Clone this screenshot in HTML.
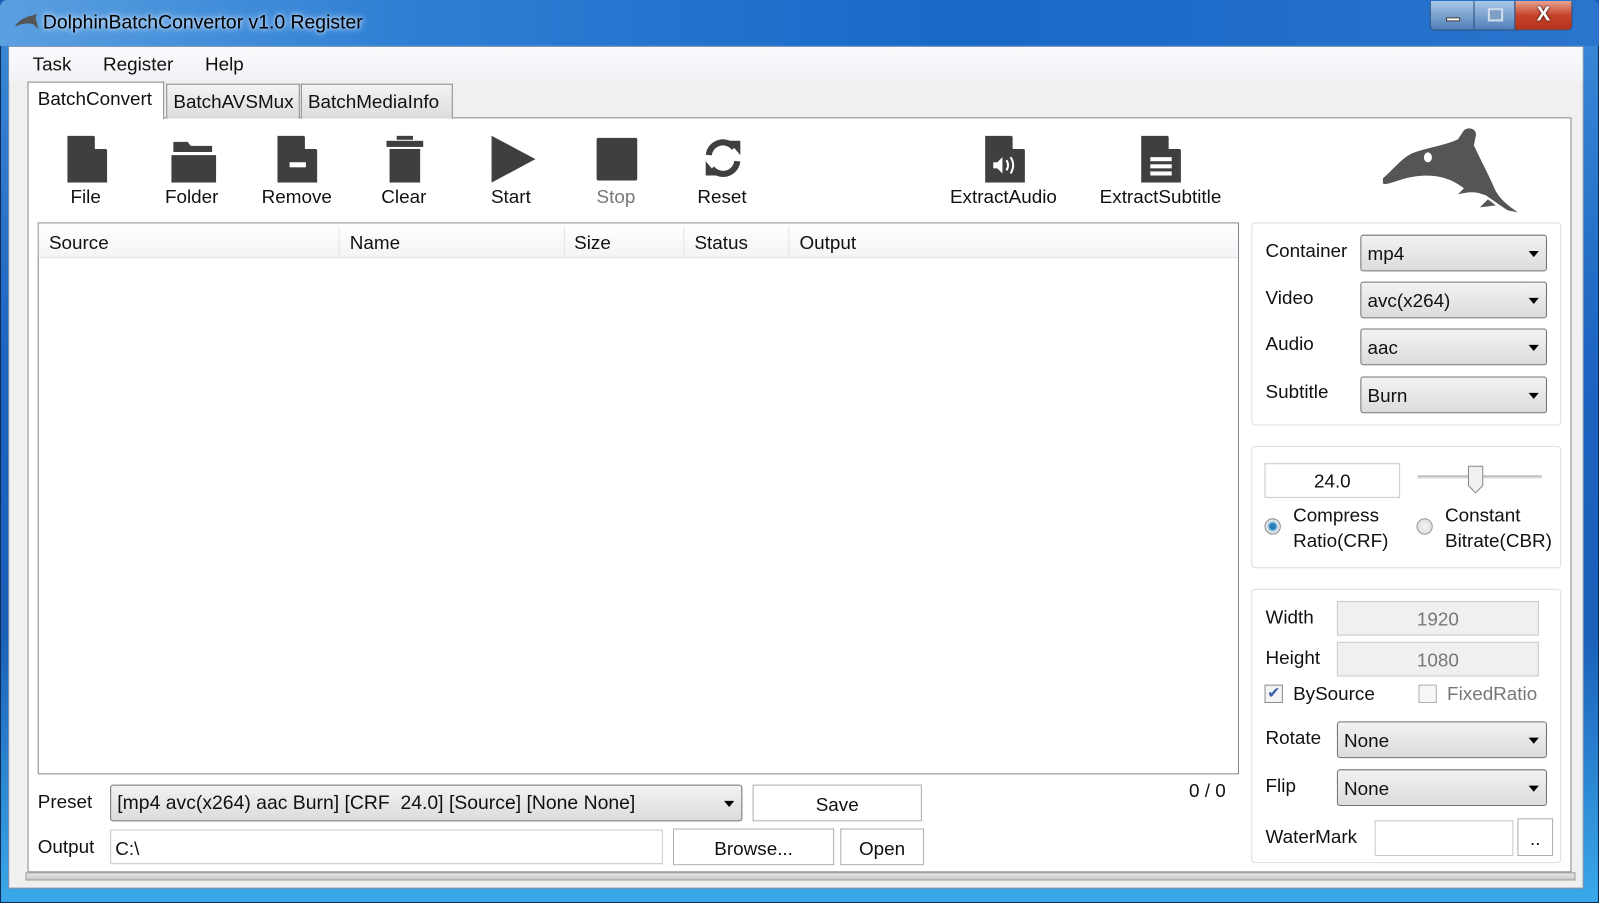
<!DOCTYPE html>
<html><head><meta charset="utf-8"><style>
*{box-sizing:border-box;margin:0;padding:0}
html,body{width:1599px;height:903px;overflow:hidden;background:#1a5fb8}
#w{position:absolute;left:0;top:0;width:1568px;height:885px;transform-origin:0 0;transform:scale(1.01977,1.0203);font-family:"Liberation Sans",sans-serif;font-size:18.5px;color:#111}
.a{position:absolute}
.frame{left:0;top:0;width:1568px;height:885px;background:linear-gradient(180deg,#3c8ad8 0%,#1d64c0 40%,#1a5fb8 70%,#3aa8e8 100%);border:1px solid #0c2e5a;border-radius:7px 7px 0 0}
.title{left:0;top:0;width:1568px;height:45px;background:linear-gradient(90deg,#5a9fe0 0%,#2f7fd4 25%,#1868c8 60%,#2a74cc 100%);border-radius:7px 7px 0 0}
.client{left:8px;top:45px;width:1545px;height:826px;background:#f0f0f0;border:1px solid #6b88a8}
.tab{top:82px;height:34px;border:1px solid #8a8a8a;border-bottom:none;background:linear-gradient(#f4f4f4,#dcdcdc);padding:6px 0 0 6px;font-size:18.5px}
.panel{left:27px;top:115px;width:1514px;height:740px;background:#fff;border:1px solid #8a8a8a}
.ico{fill:#3f3f3f}
.lbl{font-size:18.5px;text-align:center;width:140px}
.cb{border:1px solid #707070;border-radius:3px;background:linear-gradient(#f2f2f2,#dcdcdc);padding:7px 0 0 6px;font-size:18.5px}
.cb:after{content:"";position:absolute;right:7px;top:15px;border-left:5px solid transparent;border-right:5px solid transparent;border-top:6px solid #000}
.grp{border:1px solid #d5dfe5;border-radius:4px;background:#fff}
.in{border:1px solid #c9c9c9;background:#fff}
.btn{border:1px solid #adadad;background:#fff;text-align:center;padding-top:8px}
</style></head><body><div id="w">
<div class="a frame"></div>
<div class="a title"></div>
<svg class="a" style="left:14px;top:12px" width="24" height="18" viewBox="0 0 24 18"><path d="M1,13 C6,7 12,4 19,3 L22,1 L21,6 C22,10 23,14 24,17 L19,12 C14,10 8,11 1,14Z" fill="#555"/></svg>
<div class="a" style="left:42px;top:12px;font-size:19px;color:#000;text-shadow:0 0 8px #cfe4fa,0 0 4px #cfe4fa">DolphinBatchConvertor v1.0 Register</div>
<div class="a" style="left:1402px;top:1px;width:140px;height:29px;border:1px solid #34506f;border-top:none;border-radius:0 0 5px 5px;overflow:hidden;display:flex">
<div style="width:43px;background:linear-gradient(#a9c6e8,#4f7fb9);border-right:1px solid #34506f;position:relative"><div class="a" style="left:15px;top:16px;width:14px;height:4px;background:#fff;border:1px solid #333"></div></div>
<div style="width:40px;background:linear-gradient(#a9c6e8,#4f7fb9);border-right:1px solid #34506f;position:relative"><div class="a" style="left:13px;top:7px;width:15px;height:13px;border:2px solid #cfdcec;background:#7e9ec6"></div></div>
<div style="flex:1;background:linear-gradient(#e8a293,#c5422b 50%,#b8321a);color:#fff;font-size:20px;font-weight:bold;text-align:center;line-height:27px;text-shadow:0 0 2px #000">X</div></div>
<div class="a client"></div>
<div class="a" style="left:9px;top:46px;width:1543px;height:34px;background:linear-gradient(#fafbfd,#f0f2f5)"></div>
<div class="a" style="left:32px;top:52px;font-size:18.5px">Task</div>
<div class="a" style="left:101px;top:52px;font-size:18.5px">Register</div>
<div class="a" style="left:201px;top:52px;font-size:18.5px">Help</div>
<div class="a panel"></div>
<div class="a tab" style="left:163px;width:131px">BatchAVSMux</div>
<div class="a tab" style="left:295px;width:149px">BatchMediaInfo</div>
<div class="a tab" style="left:27px;top:80px;height:37px;width:134px;background:#fff;padding:5px 0 0 9px">BatchConvert</div>

<!-- toolbar -->
<svg class="a" style="left:66px;top:133px" width="40" height="46"><path class="ico" d="M0,0 H26 L39,14 V46 H0Z"/><path d="M27,0 V13 H39" fill="#fff"/></svg>
<div class="a lbl" style="left:14px;top:182px">File</div>
<svg class="a" style="left:168px;top:137px" width="44" height="42"><path class="ico" d="M2,2 H16 L19,6 H40 V12 H2Z M0,15 H44 V42 H0Z"/></svg>
<div class="a lbl" style="left:118px;top:182px">Folder</div>
<svg class="a" style="left:272px;top:133px" width="40" height="46"><path class="ico" d="M0,0 H26 L39,14 V46 H0Z"/><path d="M27,0 V13 H39" fill="#fff"/><rect x="12" y="26" width="16" height="5" fill="#fff"/></svg>
<div class="a lbl" style="left:221px;top:182px">Remove</div>
<svg class="a" style="left:377px;top:133px" width="40" height="46"><rect class="ico" x="12" y="0" width="16" height="4"/><rect class="ico" x="2" y="5" width="36" height="6"/><rect class="ico" x="5" y="13" width="30" height="33"/></svg>
<div class="a lbl" style="left:326px;top:182px">Clear</div>
<svg class="a" style="left:482px;top:133px" width="44" height="46"><path class="ico" d="M0,0 L43,23 L0,46Z"/></svg>
<div class="a lbl" style="left:431px;top:182px">Start</div>
<svg class="a" style="left:585px;top:135px" width="40" height="42"><rect class="ico" x="0" y="0" width="40" height="42" rx="2"/></svg>
<div class="a lbl" style="left:534px;top:182px;color:#777">Stop</div>
<svg class="a" style="left:688px;top:134px" width="42" height="42" viewBox="0 0 42 42"><path d="M7,18 A14,14 0 0 1 32,11" stroke="#3f3f3f" stroke-width="6" fill="none"/><path class="ico" d="M26,4 L38,4 L38,18Z"/><path d="M35,24 A14,14 0 0 1 10,31" stroke="#3f3f3f" stroke-width="6" fill="none"/><path class="ico" d="M16,38 L4,38 L4,24Z"/></svg>
<div class="a lbl" style="left:638px;top:182px">Reset</div>
<svg class="a" style="left:966px;top:133px" width="40" height="46"><path class="ico" d="M0,0 H26 L39,14 V46 H0Z"/><path d="M27,0 V13 H39" fill="#fff"/><path d="M8,26 H12 L17,21 V37 L12,32 H8Z" fill="#fff"/><path d="M21,24 Q24,29 21,34 M25,21 Q30,29 25,37" stroke="#fff" stroke-width="2" fill="none"/></svg>
<div class="a lbl" style="left:904px;top:182px;width:160px">ExtractAudio</div>
<svg class="a" style="left:1119px;top:133px" width="40" height="46"><path class="ico" d="M0,0 H26 L39,14 V46 H0Z"/><path d="M27,0 V13 H39" fill="#fff"/><rect x="9" y="21" width="21" height="4" fill="#fff"/><rect x="9" y="28" width="21" height="4" fill="#fff"/><rect x="9" y="35" width="21" height="4" fill="#fff"/></svg>
<div class="a lbl" style="left:1058px;top:182px;width:160px">ExtractSubtitle</div>
<svg class="a" style="left:1314px;top:113px" width="196" height="108" viewBox="0 0 200 110"><path fill="#555" d="M43,63 C55,52 62,43 72,38 C88,32 105,30 118,24 L124,15 C128,11 137,13 136,20 L134,30 C141,45 150,62 155,74 C160,84 168,90 178,97 L168,95 C160,90 152,84 146,80 L140,78 C133,76 126,77 118,79 L124,73 C118,68 110,64 102,62 C90,59 75,60 62,64 C52,67 45,70 43,68Z"/><ellipse cx="88" cy="42" rx="4" ry="5" fill="#fff"/><path fill="#555" d="M140,92 L148,84 L156,90 Z"/></svg>

<!-- list -->
<div class="a" style="left:37px;top:218px;width:1178px;height:541px;border:1px solid #828790;background:#fff"></div>
<div class="a" style="left:38px;top:219px;width:1176px;height:34px;background:linear-gradient(#fff,#f3f4f6);border-bottom:1px solid #e2e3e5"></div>
<div class="a" style="left:48px;top:227px">Source</div>
<div class="a" style="left:332px;top:222px;width:1px;height:30px;background:#e5e5e5"></div>
<div class="a" style="left:343px;top:227px">Name</div>
<div class="a" style="left:553px;top:222px;width:1px;height:30px;background:#e5e5e5"></div>
<div class="a" style="left:563px;top:227px">Size</div>
<div class="a" style="left:670px;top:222px;width:1px;height:30px;background:#e5e5e5"></div>
<div class="a" style="left:681px;top:227px">Status</div>
<div class="a" style="left:773px;top:222px;width:1px;height:30px;background:#e5e5e5"></div>
<div class="a" style="left:784px;top:227px">Output</div>

<!-- bottom -->
<div class="a" style="left:37px;top:775px">Preset</div>
<div class="a cb" style="left:108px;top:769px;width:620px;height:36px;font-size:19px">[mp4 avc(x264) aac Burn] [CRF&nbsp; 24.0] [Source] [None None]</div>
<div class="a btn" style="left:738px;top:769px;width:166px;height:36px">Save</div>
<div class="a" style="left:1166px;top:764px">0 / 0</div>
<div class="a" style="left:37px;top:819px">Output</div>
<div class="a in" style="left:108px;top:813px;width:542px;height:34px;padding:7px 4px">C:\</div>
<div class="a btn" style="left:660px;top:812px;width:158px;height:36px">Browse...</div>
<div class="a btn" style="left:824px;top:812px;width:82px;height:36px">Open</div>
<div class="a" style="left:25px;top:855px;width:1520px;height:8px;background:linear-gradient(#e6e6e6,#c9c9c9);border:1px solid #9a9a9a"></div>

<!-- right groups -->
<div class="a grp" style="left:1227px;top:218px;width:304px;height:199px"></div>
<div class="a" style="left:1241px;top:235px">Container</div>
<div class="a cb" style="left:1334px;top:230px;width:183px;height:36px">mp4</div>
<div class="a" style="left:1241px;top:281px">Video</div>
<div class="a cb" style="left:1334px;top:276px;width:183px;height:36px">avc(x264)</div>
<div class="a" style="left:1241px;top:326px">Audio</div>
<div class="a cb" style="left:1334px;top:322px;width:183px;height:36px">aac</div>
<div class="a" style="left:1241px;top:373px">Subtitle</div>
<div class="a cb" style="left:1334px;top:369px;width:183px;height:36px">Burn</div>

<div class="a grp" style="left:1227px;top:437px;width:304px;height:120px"></div>
<div class="a in" style="left:1240px;top:454px;width:133px;height:34px;text-align:center;padding-top:6px">24.0</div>
<div class="a" style="left:1390px;top:466px;width:122px;height:3px;background:#d8d8d8;border-top:1px solid #aaa"></div>
<svg class="a" style="left:1439px;top:456px" width="16" height="28"><path d="M1,1 H15 V20 L8,27 L1,20Z" fill="#f0f0f0" stroke="#888"/></svg>
<div class="a" style="left:1240px;top:508px;width:16px;height:16px;border-radius:50%;border:1px solid #8a8a8a;background:radial-gradient(circle,#2a7fb8 0 3px,#8fc3e6 4px,#e8e8e8 6px)"></div>
<div class="a" style="left:1268px;top:492px;line-height:25px">Compress<br>Ratio(CRF)</div>
<div class="a" style="left:1389px;top:508px;width:16px;height:16px;border-radius:50%;border:1px solid #9a9a9a;background:radial-gradient(circle,#f6f6f6,#d6d6d6)"></div>
<div class="a" style="left:1417px;top:492px;line-height:25px">Constant<br>Bitrate(CBR)</div>

<div class="a grp" style="left:1227px;top:577px;width:304px;height:269px"></div>
<div class="a" style="left:1241px;top:594px">Width</div>
<div class="a in" style="left:1311px;top:589px;width:198px;height:34px;background:#f0f0f0;color:#777;text-align:center;padding-top:6px">1920</div>
<div class="a" style="left:1241px;top:634px">Height</div>
<div class="a in" style="left:1311px;top:629px;width:198px;height:34px;background:#f0f0f0;color:#777;text-align:center;padding-top:6px">1080</div>
<div class="a" style="left:1240px;top:671px;width:18px;height:18px;border:1px solid #8f8f8f;background:#f4f4f4;color:#3a5ea8;font-size:15px;text-align:center;line-height:16px">✔</div>
<div class="a" style="left:1268px;top:669px">BySource</div>
<div class="a" style="left:1391px;top:671px;width:18px;height:18px;border:1px solid #b0b0b0;background:#f6f6f6"></div>
<div class="a" style="left:1419px;top:669px;color:#777">FixedRatio</div>
<div class="a" style="left:1241px;top:712px">Rotate</div>
<div class="a cb" style="left:1311px;top:707px;width:206px;height:36px">None</div>
<div class="a" style="left:1241px;top:759px">Flip</div>
<div class="a cb" style="left:1311px;top:754px;width:206px;height:36px">None</div>
<div class="a" style="left:1241px;top:809px">WaterMark</div>
<div class="a in" style="left:1348px;top:804px;width:136px;height:35px"></div>
<div class="a btn" style="left:1488px;top:802px;width:35px;height:37px;padding-top:8px">..</div>
</div></body></html>
